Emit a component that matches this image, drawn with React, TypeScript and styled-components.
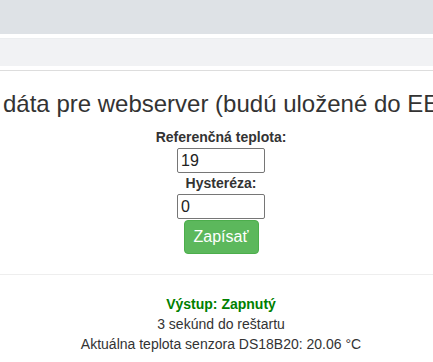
import React from "react";
import styled, { createGlobalStyle } from "styled-components";

const Global = createGlobalStyle`
  html, body { margin: 0; padding: 0; background: #fff; }
  body { font-family: "Liberation Sans", Arial, sans-serif; color: #333; overflow: hidden; }
`;

const Page = styled.div`
  width: 433px;
  height: 362px;
  overflow: hidden;
`;

const TopBar = styled.div`
  height: 34px;
  background: #dee2e6;
`;

const SubBar = styled.div`
  margin-top: 4px;
  height: 28px;
  background: #f1f2f4;
  border-top: 1px solid #eceef0;
  box-sizing: border-box;
`;

const Rule = styled.hr<{ $color: string; $top: number }>`
  border: 0;
  border-top: 1px solid ${(p) => p.$color};
  margin: ${(p) => p.$top}px 0 0;
`;

const Heading = styled.h2`
  margin: 18px 0 0 3px;
  font-size: 24px;
  font-weight: normal;
  line-height: 30px;
  white-space: nowrap;
  color: #333;
`;

const Form = styled.form`
  display: flex;
  flex-direction: column;
  align-items: center;
  padding-left: 9px;
  margin-top: 8px;
`;

const Label = styled.label`
  font-weight: bold;
  font-size: 14px;
  line-height: 21px;
`;

const Input = styled.input`
  box-sizing: border-box;
  width: 88px;
  height: 25px;
  border: 1px solid #767676;
  border-radius: 2px;
  padding: 0 4px 0 3px;
  font-family: "Liberation Sans", Arial, sans-serif;
  font-size: 16px;
  color: #222;
`;

const Button = styled.button`
  margin-top: 1px;
  width: 75px;
  height: 34px;
  background: #5cb85c;
  border: 1px solid #4cae4c;
  border-radius: 4px;
  color: #fff;
  font-family: "Liberation Sans", Arial, sans-serif;
  font-size: 16px;
`;

const Status = styled.div`
  margin-top: 19px;
  padding-left: 9px;
  display: flex;
  flex-direction: column;
  align-items: center;
  font-size: 14px;
  line-height: 20px;
`;

const Output = styled.div`
  color: green;
  font-weight: bold;
`;

export default function App() {
  return (
    <Page>
      <Global />
      <TopBar />
      <SubBar />
      <Rule $color="#dddddd" $top={4} />
      <Heading>dáta pre webserver (budú uložené do EEPROM)</Heading>
      <Form onSubmit={(e) => e.preventDefault()}>
        <Label htmlFor="ref">Referenčná teplota:</Label>
        <Input id="ref" defaultValue="19" />
        <Label htmlFor="hys">Hysteréza:</Label>
        <Input id="hys" defaultValue="0" />
        <Button type="submit">Zapísať</Button>
      </Form>
      <Rule $color="#eeeeee" $top={20} />
      <Status>
        <Output>Výstup: Zapnutý</Output>
        <div>3 sekúnd do reštartu</div>
        <div>Aktuálna teplota senzora DS18B20: 20.06 °C</div>
      </Status>
    </Page>
  );
}
